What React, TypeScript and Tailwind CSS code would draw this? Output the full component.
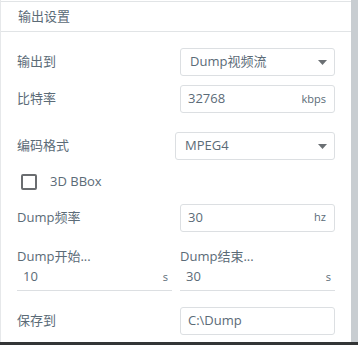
import { ReactNode } from 'react';

const font = { fontFamily: '"Open Sans", "Noto Sans CJK SC", sans-serif' };

function Caret() {
  return (
    <svg width="9" height="5" viewBox="0 0 9 5" className="text-[#6b6f73]">
      <path d="M0 0h9L4.5 5z" fill="currentColor" />
    </svg>
  );
}

function Row({ label, children, className }: { label: string; children: ReactNode; className?: string }) {
  return (
    <div className={`flex items-center justify-between ${className ?? ''}`}>
      <span className="text-[13px] text-[#5b6b77]">{label}</span>
      {children}
    </div>
  );
}

function SelectBox({ value, width }: { value: string; width: string }) {
  return (
    <div className={`${width} h-[28px] flex items-center justify-between pl-[9px] pr-[7px] border border-[#dcdfe2] rounded-[3px] bg-white`}>
      <span className="text-[13px] text-[#5b6b77]">{value}</span>
      <Caret />
    </div>
  );
}

function InputBox({ value, unit }: { value: string; unit?: string }) {
  return (
    <div className="w-[155px] h-[28px] flex items-center justify-between pl-[7px] pr-[8px] border border-[#dcdfe2] rounded-[3px] bg-white">
      <span className="text-[13px] text-[#5b6b77]">{value}</span>
      {unit && <span className="text-[11px] text-[#5b6b77]">{unit}</span>}
    </div>
  );
}

function UnderlineField({ label, value, unit }: { label: string; value: string; unit: string }) {
  return (
    <div className="w-[155px] flex flex-col">
      <span className="text-[13px] leading-[18px] text-[#5b6b77]">{label}</span>
      <div className="h-[26px] flex items-center justify-between pl-[6px] pr-[4px] border-b border-[#dcdfe2]">
        <span className="text-[13px] text-[#5b6b77]">{value}</span>
        <span className="text-[11px] text-[#5b6b77]">{unit}</span>
      </div>
    </div>
  );
}

export default function App() {
  return (
    <div className="w-[358px] h-[345px] flex flex-col bg-white overflow-hidden" style={font}>
      <div className="flex-1 flex">
        <div className="flex-1 flex flex-col border-l border-[#e6e8ea]">
          <div className="mt-[1px] h-[31px] flex items-center pl-[17px] border-t border-b border-[#e1e4e6]">
            <span className="text-[13px] text-[#5b6b77]">输出设置</span>
          </div>
          <div className="flex flex-col pl-[16px] pr-[16px]">
            <Row label="输出到" className="mt-[16px]">
              <SelectBox value="Dump视频流" width="w-[155px]" />
            </Row>
            <Row label="比特率" className="mt-[9px]">
              <InputBox value="32768" unit="kbps" />
            </Row>
            <Row label="编码格式" className="mt-[19px]">
              <SelectBox value="MPEG4" width="w-[160px]" />
            </Row>
            <div className="mt-[12px] flex items-center pl-[4px]">
              <div className="w-[16px] h-[16px] border-2 border-[#6a6d70] rounded-[2px]" />
              <span className="ml-[13px] text-[13px] text-[#5b6b77]">3D BBox</span>
            </div>
            <Row label="Dump频率" className="mt-[12px]">
              <InputBox value="30" unit="hz" />
            </Row>
            <div className="mt-[15px] flex justify-between">
              <UnderlineField label="Dump开始..." value="10" unit="s" />
              <UnderlineField label="Dump结束..." value="30" unit="s" />
            </div>
            <Row label="保存到" className="mt-[16px]">
              <InputBox value="C:\Dump" />
            </Row>
          </div>
        </div>
        <div className="w-[7px] bg-[#c8cdd1]" />
      </div>
      <div className="h-[3px] bg-[#333536]" />
    </div>
  );
}
